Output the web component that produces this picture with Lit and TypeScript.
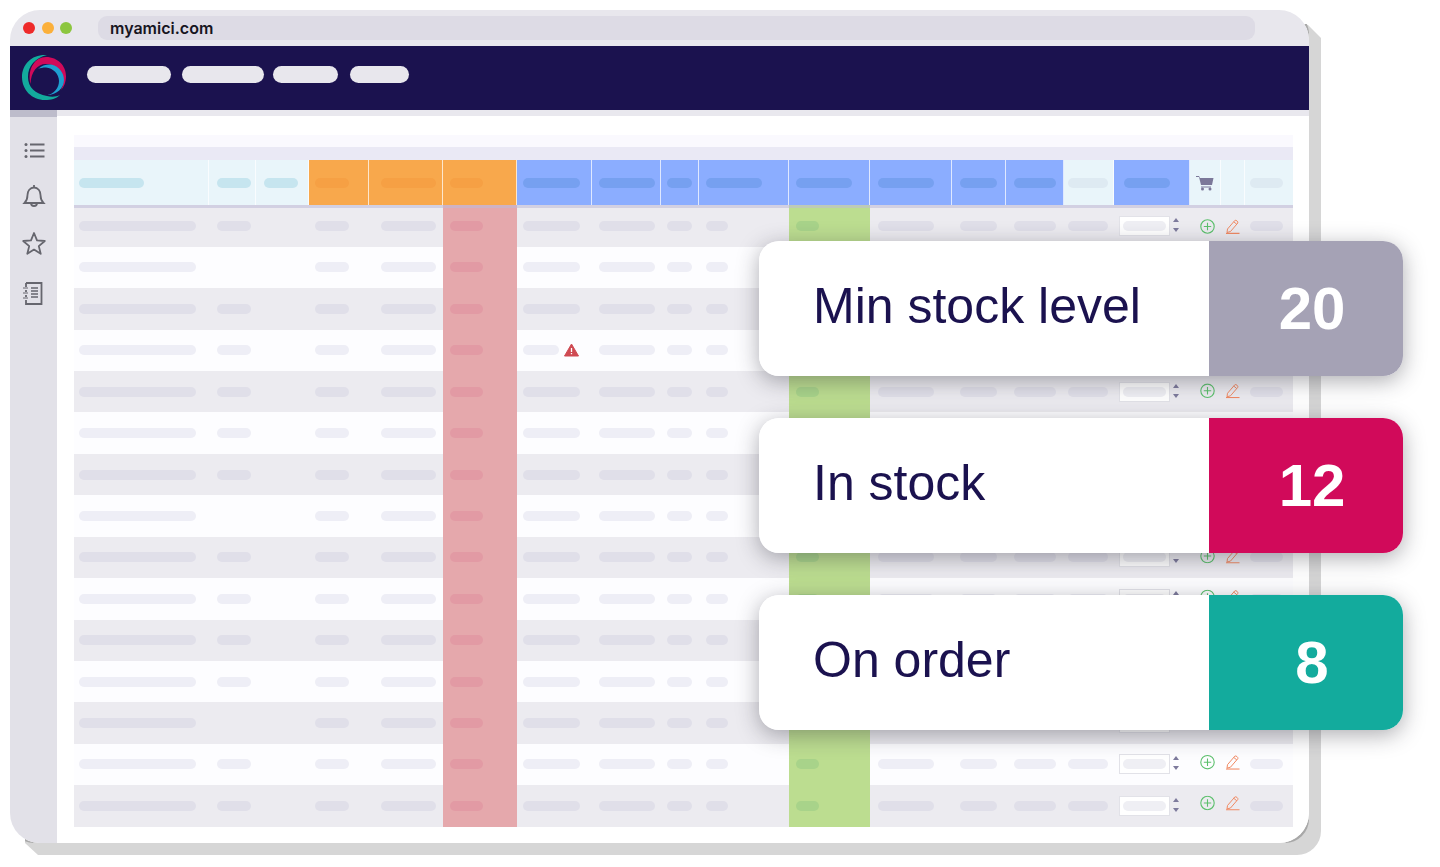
import { LitElement, html, css, svg } from 'lit'
import { customElement } from 'lit/decorators.js'

type Col = { w: number; head: string; px: number; pw: number; rw?: number; tint?: string }

// x offsets are relative to each cell's left edge
const cols: Col[] = [
	{ w: 135, head: 'cyan', px: 5, pw: 65, rw: 117 },
	{ w: 47, head: 'cyan', px: 8, pw: 34 },
	{ w: 53, head: 'cyan', px: 8, pw: 34, rw: 0 },
	{ w: 60, head: 'orange', px: 6, pw: 34 },
	{ w: 74, head: 'orange', px: 12, pw: 55 },
	{ w: 74, head: 'orange', px: 7, pw: 33, tint: 'red' },
	{ w: 75, head: 'blue', px: 6, pw: 57 },
	{ w: 69, head: 'blue', px: 7, pw: 56 },
	{ w: 38, head: 'blue', px: 6, pw: 25 },
	{ w: 90, head: 'blue', px: 7, pw: 56, rw: 22 },
	{ w: 81, head: 'blue', px: 7, pw: 56, rw: 23, tint: 'green' },
	{ w: 82, head: 'blue', px: 8, pw: 56 },
	{ w: 54, head: 'blue', px: 8, pw: 37 },
	{ w: 58, head: 'blue', px: 8, pw: 42 },
	{ w: 50, head: 'cyan pale', px: 4, pw: 40 },
]

const navPills = [
	[84, 11],
	[82, 9],
	[65, 12],
	[59, 0],
]
const noSecond = [1, 7, 12]
const rows = Array.from({ length: 15 }, (_, i) => i)

const listIcon = svg`<path d="M8 4h14.500M8 10h14.500M8 16h14.500" stroke-width="2"/><g fill="#66666e" stroke="none"><circle cx="4" cy="4" r="1.500"/><circle cx="4" cy="10" r="1.500"/><circle cx="4" cy="16" r="1.500"/></g>`
const bellIcon = svg`<path d="M2 19c2-2 3-4 3-8 0-4 2.500-7.500 6.500-7.500S18 7 18 11c0 4 1 6 3 8z"/><path d="M8.500 19c0 4 6 4 6 0M11.500 1v2.500"/>`
const starIcon = svg`<path d="M12 2l3 7.400 7.800.6-6 5.100 1.900 7.700L12 18.600l-6.700 4.200 1.900-7.700-6-5.100L9 9.400z" stroke-linejoin="round"/>`
const docIcon = svg`<path d="M4 2h15.500v21H4v-4M4 6V2M4 9v2M4 14v2"/><path d="M1 7h5M1 12h5M1 17h5" stroke-width="1.200"/><path d="M9 7h7M9 10h7M9 13h7M9 16h7" stroke-width="1.600"/>`

@customElement('app-root')
export class AppRoot extends LitElement {
	static styles = css`
		:host {
			display: block;
			height: 867px;
			background: #fff;
			font-family: "Liberation Sans", Arial, sans-serif;
			overflow: hidden;
		}

		* {
			box-sizing: border-box;
		}

		.stage {
			position: relative;
			width: 1299px;
			height: 833px;
			margin: 10px 0 0 10px;
		}

		.backing {
			position: absolute;
			left: 12px;
			top: 12px;
			width: 1299px;
			height: 833px;
			background: #d6d6d6;
			border-radius: 0 0 24px 0;
			clip-path: polygon(0 0, calc(100% - 13px) 3px, 100% 16px, 100% 100%, 16px 100%, 3px calc(100% - 12px));
		}

		.edge {
			position: absolute;
			inset: 0;
			border-radius: 24px;
			background: #a8a8a8;
			clip-path: polygon(50% 50%, calc(100% - 6px) 14px, 100% 14px, 100% 100%, 15px 100%, 15px calc(100% - 10px));
		}

		.window {
			position: relative;
			height: 100%;
			border-radius: 30px;
			overflow: hidden;
			background: #fff;
			display: flex;
			flex-direction: column;
		}

		.chrome {
			height: 36px;
			flex: none;
			background: #e8e7ed;
			display: flex;
			align-items: center;
			padding: 0 54px 0 13px;
		}

		.dot {
			width: 12px;
			height: 12px;
			border-radius: 50%;
			margin-right: 6.500px;
		}

		.url {
			flex: 1;
			height: 24px;
			margin-left: 19.500px;
			border-radius: 9px;
			background: #dddbe5;
			color: #17151f;
			font: 600 16px/24px Inter, "Liberation Sans", sans-serif;
			padding-left: 12px;
		}

		.nav {
			height: 64px;
			flex: none;
			background: #1b124f;
			display: flex;
			align-items: center;
			padding-left: 12px;
		}

		.logo {
			width: 46px;
			height: 48px;
			margin-right: 19px;
			flex: none;
		}

		.nav span {
			height: 17px;
			border-radius: 9px;
			background: #e8e7ed;
			margin-top: -8px;
		}

		.body {
			flex: 1;
			display: flex;
			min-height: 0;
		}

		.side {
			width: 47px;
			flex: none;
			background: linear-gradient(#bdbccb 0 7px, #e2e1e8 7px);
			display: flex;
			flex-direction: column;
			align-items: center;
			padding-top: 27px;
			gap: 22px;
		}

		.side svg {
			width: 24px;
			height: 25px;
			fill: none;
			stroke: #66666e;
			stroke-width: 1.800;
		}

		.side .doc {
			margin-top: 3px;
		}

		.main {
			flex: 1;
			padding: 25px 16px 0 17px;
			background: linear-gradient(#e9e8ee 0 6px, #fff 6px);
		}

		.top1 {
			height: 12px;
			background: #faf9fe;
		}

		.top2 {
			height: 13px;
			background: #eae9f5;
		}

		.head,
		.row {
			display: flex;
		}

		.head {
			height: 48px;
			border-bottom: 3px solid rgba(190, 185, 215, 0.55);
			position: relative;
			z-index: 1;
		}

		.row {
			height: 41.430px;
			background: #fdfdff;
		}

		.row.alt {
			background: #ecebf0;
		}

		.first {
			margin-top: -3px;
			height: 41.730px;
			padding-top: 0.300px;
		}

		.cell {
			flex: none;
			display: flex;
			align-items: center;
			position: relative;
		}

		.head .cell {
			border-right: 1px solid #ffffffb8;
			height: 45px;
		}

		.cell i {
			display: block;
			height: 10px;
			border-radius: 5px;
			background: #eeeef6;
		}

		.row.alt .cell i {
			background: #e0dfe9;
		}

		.cyan {
			background: #e9f5fa;
		}

		.cyan i {
			background: #c6e5ef;
		}

		.orange {
			background: #f8a84c;
		}

		.orange i {
			background: #f6a044;
		}

		.blue {
			background: #8badff;
		}

		.blue i {
			background: #76a0f0;
		}

		.cell.pale i {
			background: #deeaf2;
		}

		.row .red {
			background: #e5a8ac;
		}

		.row.alt .cell.red i,
		.row .cell.red i {
			background: #e29aa4;
		}

		.row .green {
			background: #bcdd90;
		}

		.row.alt .cell.green i,
		.row .cell.green i {
			background: #a8d38a;
		}

		.warn {
			position: absolute;
			left: 47px;
			top: 13px;
			width: 15px;
			height: 14px;
		}

		.cart {
			width: 18px;
			height: 16px;
			margin-left: 6px;
		}

		.tools {
			flex: none;
			width: 179px;
			display: flex;
			align-items: center;
			padding-left: 5px;
		}

		.tools i {
			display: block;
			height: 10px;
			border-radius: 5px;
			background: #eeeef6;
		}

		.row.alt .tools i {
			background: #e0dfe9;
		}

		.input {
			width: 51px;
			height: 20px;
			background: #fff;
			border: 1px solid #e2e2e8;
			padding: 4px 3px;
			flex: none;
		}

		.row .tools .input i {
			background: #efeff4;
		}

		.spin {
			width: 10px;
			height: 20px;
			margin-left: 2px;
			flex: none;
		}

		.add {
			width: 15px;
			height: 15px;
			margin-left: 18px;
			flex: none;
			transform: translateY(var(--drift));
		}

		.pen {
			width: 14px;
			height: 15px;
			margin-left: 11px;
			flex: none;
			transform: translateY(var(--drift));
		}

		.last {
			width: 33px;
			margin-left: 10px;
			flex: none;
		}

		.cards {
			position: absolute;
			left: 749px;
			top: 231px;
			display: flex;
			flex-direction: column;
			gap: 42px;
		}

		.card {
			width: 644px;
			height: 135px;
			border-radius: 20px;
			overflow: hidden;
			display: flex;
			background: #fff;
		}

		.shadow {
			border-radius: 20px;
			box-shadow: 0 5px 22px rgba(40, 40, 50, 0.38);
		}

		.label {
			width: 450px;
			padding-left: 54px;
			font-size: 50px;
			line-height: 131px;
			color: #1b124f;
		}

		.num {
			flex: 1;
			text-align: center;
			color: #fff;
			font-size: 60px;
			font-weight: 700;
			line-height: 135px;
			padding-left: 12px;
		}
	`

	private pill(c: Col, row: number, i: number) {
		if (c.rw === 0) return null
		if (i === 1 && noSecond.includes(row)) return null
		let w = c.rw ?? c.pw
		if (i === 6 && row === 3) w = 36
		return html`<i style="margin-left:${c.px}px;width:${w}px"></i>`
	}

	// the add and edit icons creep up a little further down the table
	private tools(row: number) {
		return html`<div class="tools" style="--drift:${(-row * 2.5) / 14}px">
			<div class="input"><i></i></div>
			<svg class="spin" viewBox="0 0 10 20" fill="#7d7a9c"><path d="M1 6l3-4 3 4zM1 12l3 4 3-4z"/></svg>
			<svg class="add" viewBox="0 0 15 15" fill="none" stroke="#5cc06c" stroke-width="1.100"><circle cx="7.500" cy="7.500" r="6.700"/><path d="M7.500 3.800v7.400M3.800 7.500h7.400"/></svg>
			<svg class="pen" viewBox="0 0 14 15" fill="none" stroke="#f08a64" stroke-width="1"><path d="M1.500 10L8.800 1.500c1-1 3.800 1.200 3 2.500L4.500 12.500l-3.500 1z"/><path d="M7.800 2.800l3 2.500"/><path d="M0 14.400h13.500" stroke-width="1.300"/></svg>
			<i class="last"></i>
		</div>`
	}

	render() {
		return html`<div class="stage">
			<div class="backing"></div>
			<div class="edge"></div>
			<div class="window">
				<div class="chrome">
					<span class="dot" style="background:#ee2a2a"></span>
					<span class="dot" style="background:#fbb03b"></span>
					<span class="dot" style="background:#8cc63f"></span>
					<div class="url">myamici.com</div>
				</div>
				<div class="nav">
					<svg class="logo" viewBox="0 0 46 48">
						<path fill="#13ab9d" d="M25 1C10 0 0 10 0 23c0 13 10 23 23 23 6 0 11-1 15-5-4 2-9 2-13 1C13 40 6 33 6 23 6 12 13 4 25 1z"/>
						<path fill="#d10a5a" d="M8.500 30C5 15 13 3 24 3C36 3 44 12 44 22C44 28 42 33 39 36C41 32 42 28 41 24C39 14 31 10 24 10C15 10 9 18 8.500 30z"/>
						<path fill="#1e9fd0" d="M16 15C20 11 25 10 29 10.500C37 12 42 19 42 26C42 34 35 41 25 41C32 40 37 34 37 27C37 20 31 14 24 13.500C21 13.500 18 14 16 15z"/>
					</svg>
					${navPills.map(([w, g]) => html`<span style="width:${w}px;margin-right:${g}px"></span>`)}
				</div>
				<div class="body">
					<div class="side">
						<svg viewBox="0 -1 24 20">${listIcon}</svg>
						<svg viewBox="0 0 23 25">${bellIcon}</svg>
						<svg viewBox="0 0 24 25">${starIcon}</svg>
						<svg class="doc" viewBox="0 0 24 25">${docIcon}</svg>
					</div>
					<div class="main">
						<div class="top1"></div>
						<div class="top2"></div>
						<div class="head">
							${cols.map((c) => html`<div class="cell ${c.head}" style="width:${c.w}px"><i style="margin-left:${c.px}px;width:${c.pw}px"></i></div>`)}
							<div class="cell blue" style="width:76px"><i style="margin-left:10px;width:46px"></i></div>
							<div class="cell cyan" style="width:31px">
								<svg class="cart" viewBox="0 0 18 16" fill="#7b7899"><path d="M0 1h3l1 2h13.500l-1.500 7H5L3 2H0z"/><circle cx="6.500" cy="14" r="1.500"/><circle cx="14" cy="14" r="1.500"/><path d="M5 11.500h10v1H5z"/></svg>
							</div>
							<div class="cell cyan" style="width:24px"></div>
							<div class="cell cyan pale" style="width:48px;border:0"><i style="margin-left:5px;width:33px"></i></div>
						</div>
						${rows.map((r) => html`<div class="row ${r % 2 === 0 ? 'alt' : ''} ${r === 0 ? 'first' : ''}">
							${cols.map((c, i) => html`<div class="cell ${c.tint ?? ''}" style="width:${c.w}px">
								${this.pill(c, r, i)}
								${i === 6 && r === 3 ? html`<svg class="warn" viewBox="0 0 15 14"><path fill="#cf4a52" d="M7.500 1L14.500 13H.5z" stroke="#cf4a52" stroke-linejoin="round"/><path stroke="#fff" stroke-width="1.300" d="M7.500 5v4M7.500 10v1.300"/></svg>` : null}
							</div>`)}
							${this.tools(r)}
						</div>`)}
					</div>
				</div>
			</div>
			<div class="cards">
				${[
					['Min stock level', '20', '#a5a2b5'],
					['In stock', '12', '#d10a5a'],
					['On order', '8', '#13ab9d'],
				].map(([t, n, bg]) => html`<div class="shadow"><div class="card">
					<div class="label">${t}</div>
					<div class="num" style="background:${bg}">${n}</div>
				</div></div>`)}
			</div>
		</div>`
	}
}
